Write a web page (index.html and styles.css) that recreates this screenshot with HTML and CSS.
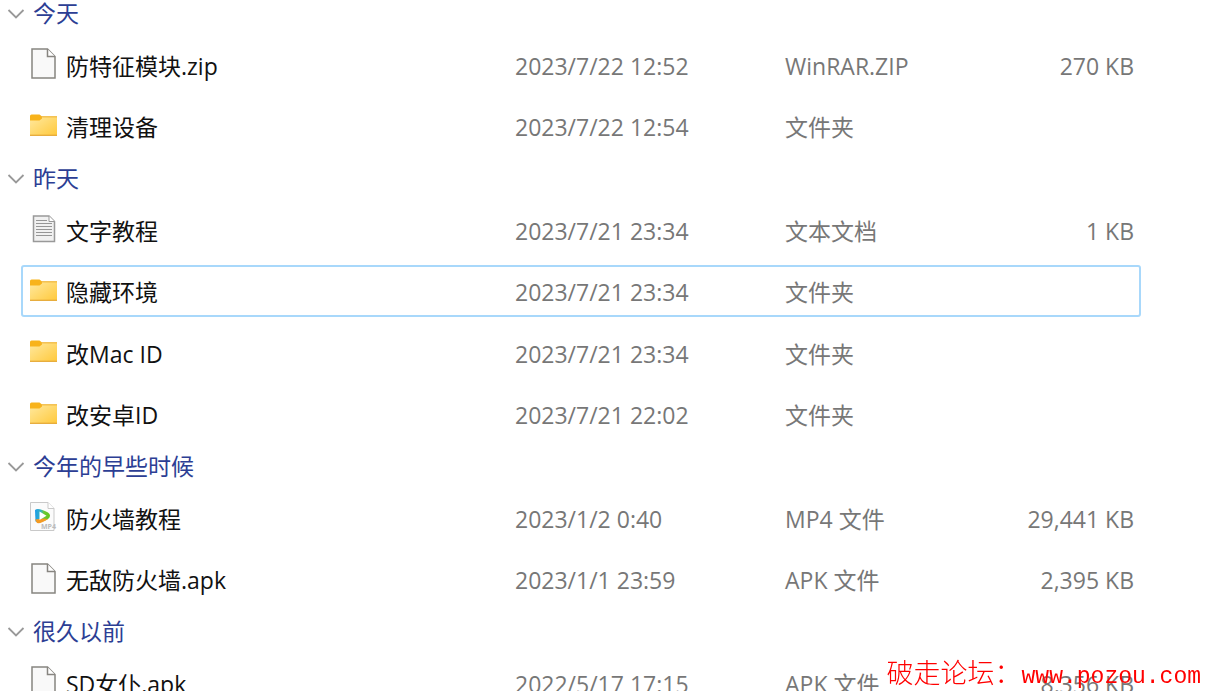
FILE: index.html
```html
<!DOCTYPE html>
<html lang="zh-CN">
  <head>
    <meta charset="UTF-8">
    <meta name="viewport" content="width=device-width,initial-scale=1">
    <title>文件列表</title>
    <link rel="stylesheet" href="styles.css">
  </head>
  <body>
    <!-- shared icons -->
    <svg class="defs" width="0" height="0">
      <defs>
        <linearGradient id="folder-fill" x1="0" y1="0" x2="1" y2="1">
          <stop offset="0" stop-color="#ffe9a0"/>
          <stop offset="1" stop-color="#ffc93c"/>
        </linearGradient>
        <linearGradient id="play-fill" x1="0" y1="0" x2="1" y2="0">
          <stop offset="0" stop-color="#1b9be8"/>
          <stop offset="0.4" stop-color="#35b5c0"/>
          <stop offset="0.6" stop-color="#6cc832"/>
          <stop offset="1" stop-color="#62c51c"/>
        </linearGradient>
      </defs>
      <symbol id="chevron" viewBox="0 0 18 12">
        <path d="M1.500 2L9 9.500L16.500 2" fill="none" stroke="#999" stroke-width="1.800"/>
      </symbol>
      <symbol id="file" viewBox="0 0 30 32">
        <path d="M3 1H18.500L26 8.500V30H3Z" fill="#f9f9f9" stroke="#878580" stroke-width="1.500"/>
        <path d="M18.500 1V8.500H26" fill="#fff" stroke="#878580" stroke-width="1.500"/>
      </symbol>
      <symbol id="folder" viewBox="0 0 30 32">
        <path d="M1 6Q1 4.500 2.500 4.500H10.500L13 6.500V11H1Z" fill="#f8b31b"/>
        <path d="M1 10.500H10.500L13 8.500V6.500H28V25.500H1Z" fill="url(#folder-fill)"/>
        <path d="M12 6.800H28" stroke="#f0b73c" stroke-width="1.200"/>
        <path d="M1 25.300H28" stroke="#e5a633" stroke-width="1.200"/>
      </symbol>
      <symbol id="text" viewBox="0 0 30 32">
        <path d="M4.500 3H20L25.500 8.500V28.500H4.500Z" fill="#f1f1f1" stroke="#999" stroke-width="1.500"/>
        <path d="M20 3V8.500H25.500" fill="#fff" stroke="#999"/>
        <path d="M7 7.500H18M7 10.500H23M7 13.500H23M7 16.500H23M7 19.500H23M7 22.500H23" stroke="#969696" stroke-width="1.200"/>
      </symbol>
      <symbol id="video" viewBox="0 0 30 32">
        <path d="M1.500 1.500H19L25 7.500V29.500H1.500Z" fill="#fbfbfb" stroke="#c9c9c9"/>
        <path d="M19 1.500V7.500H25" fill="#fff" stroke="#c9c9c9"/>
        <path d="M6 9Q9 6 19 11.500Q23 14.500 19 18Q10 23 6.500 20.500Z" fill="url(#play-fill)"/>
        <path d="M6 18.500L8 22Q12 23 19 18L14 17.500Z" fill="#f49a22"/>
        <path d="M10.500 10.500L17.500 14.700L10.500 19Z" fill="#fff"/>
        <text class="mp4-mark" x="12" y="28">MP4</text>
      </symbol>
    </svg>

    <table class="files">
      <colgroup>
        <col class="col-name">
        <col class="col-date">
        <col class="col-type">
        <col class="col-size">
        <col>
      </colgroup>
      <tbody>
        <tr class="group"><th colspan="5" scope="rowgroup"><button class="toggle"><svg class="chevron"><use href="#chevron"/></svg>今天</button></th></tr>
        <tr class="file">
          <td class="name"><div class="label"><svg class="icon"><use href="#file"/></svg>防特征模块.zip</div></td>
          <td>2023/7/22 12:52</td><td>WinRAR.ZIP</td><td class="size">270 KB</td><td></td>
        </tr>
        <tr class="file">
          <td class="name"><div class="label"><svg class="icon"><use href="#folder"/></svg>清理设备</div></td>
          <td>2023/7/22 12:54</td><td>文件夹</td><td class="size"></td><td></td>
        </tr>
      </tbody>
      <tbody>
        <tr class="group"><th colspan="5" scope="rowgroup"><button class="toggle"><svg class="chevron"><use href="#chevron"/></svg>昨天</button></th></tr>
        <tr class="file">
          <td class="name"><div class="label"><svg class="icon"><use href="#text"/></svg>文字教程</div></td>
          <td>2023/7/21 23:34</td><td>文本文档</td><td class="size">1 KB</td><td></td>
        </tr>
        <tr class="file focused">
          <td class="name"><div class="label"><svg class="icon"><use href="#folder"/></svg>隐藏环境</div></td>
          <td>2023/7/21 23:34</td><td>文件夹</td><td class="size"></td><td></td>
        </tr>
        <tr class="file">
          <td class="name"><div class="label"><svg class="icon"><use href="#folder"/></svg>改Mac ID</div></td>
          <td>2023/7/21 23:34</td><td>文件夹</td><td class="size"></td><td></td>
        </tr>
        <tr class="file">
          <td class="name"><div class="label"><svg class="icon"><use href="#folder"/></svg>改安卓ID</div></td>
          <td>2023/7/21 22:02</td><td>文件夹</td><td class="size"></td><td></td>
        </tr>
      </tbody>
      <tbody>
        <tr class="group"><th colspan="5" scope="rowgroup"><button class="toggle"><svg class="chevron"><use href="#chevron"/></svg>今年的早些时候</button></th></tr>
        <tr class="file">
          <td class="name"><div class="label"><svg class="icon"><use href="#video"/></svg>防火墙教程</div></td>
          <td>2023/1/2 0:40</td><td>MP4 文件</td><td class="size">29,441 KB</td><td></td>
        </tr>
        <tr class="file">
          <td class="name"><div class="label"><svg class="icon"><use href="#file"/></svg>无敌防火墙.apk</div></td>
          <td>2023/1/1 23:59</td><td>APK 文件</td><td class="size">2,395 KB</td><td></td>
        </tr>
      </tbody>
      <tbody>
        <tr class="group"><th colspan="5" scope="rowgroup"><button class="toggle"><svg class="chevron"><use href="#chevron"/></svg>很久以前</button></th></tr>
        <tr class="file">
          <td class="name"><div class="label"><svg class="icon"><use href="#file"/></svg>SD女仆.apk</div></td>
          <td>2022/5/17 17:15</td><td>APK 文件</td><td class="size">8,356 KB</td><td></td>
        </tr>
      </tbody>
    </table>

    <div class="watermark"><span class="site">破走论坛：</span><span class="url">www.pozou.com</span></div>
  </body>
</html>
```

FILE: styles.css
```css
body {
  margin: 0;
  height: 100vh;
  overflow: hidden;
  background-color: #fff;
  color: #777;
  font-family: "Open Sans", "Noto Sans CJK SC", sans-serif;
  font-size: 23px;
  line-height: 27px;
}
.defs {
  position: absolute;
}
.files {
  width: 100%;
  table-layout: fixed;
  border-collapse: collapse;
}
.col-name {
  width: 515px;
}
.col-date {
  width: 270px;
}
.col-type {
  width: 200px;
}
.col-size {
  width: 149px;
}
th, td {
  padding: 0;
  text-align: left;
  font-weight: normal;
  white-space: nowrap;
}
.group th {
  padding: 7px 0 8px 7px;
}
tbody:first-of-type .group th {
  padding-top: 0;
}
.toggle {
  display: flex;
  align-items: center;
  gap: 8px;
  padding: 0;
  border: 0;
  background: none;
  color: #2c3e94;
  font: inherit;
}
.chevron {
  width: 18px;
  height: 12px;
}
.file {
  position: relative;
  height: 61px;
}
.file:nth-child(even) {
  height: 62px;
}
.label {
  display: flex;
  align-items: center;
  gap: 7px;
  padding-left: 29px;
  color: #111;
}
.icon {
  width: 30px;
  height: 32px;
  margin-bottom: 4px;
}
.mp4-mark {
  font-size: 7px;
  font-weight: bold;
  fill: #bbb;
}
.size {
  text-align: right;
}
.focused::after {
  content: "";
  position: absolute;
  inset: 3px 65px 6px 21px;
  border: 2px solid #a8d8fb;
  border-radius: 3px;
}
.watermark {
  position: fixed;
  right: 5px;
  bottom: 0;
  display: flex;
  align-items: baseline;
  color: #f00;
}
.site {
  font-family: "Liberation Serif", "Noto Sans CJK SC", serif;
  font-size: 27px;
  font-weight: 300;
}
.url {
  font-family: "Liberation Mono", monospace;
  font-size: 23px;
}
```
